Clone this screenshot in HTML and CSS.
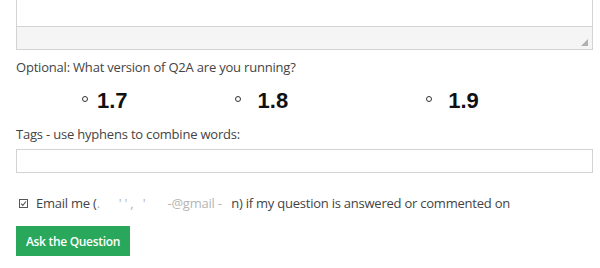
FILE: index.html
```html
<!DOCTYPE html>
<html>
<head>
<meta charset="utf-8">
<link rel="stylesheet" href="styles.css">
</head>
<body>
<div class="form">
  <div class="editor">
    <div class="editor-body"></div>
    <div class="editor-bottom"><span class="grip"></span></div>
  </div>
  <div class="label label-version">Optional: What version of Q2A are you running?</div>
  <div class="versions">
    <label class="opt opt-17"><span class="radio"></span><span class="ver">1.7</span></label>
    <label class="opt opt-18"><span class="radio"></span><span class="ver">1.8</span></label>
    <label class="opt opt-19"><span class="radio"></span><span class="ver">1.9</span></label>
  </div>
  <div class="label label-tags">Tags - use hyphens to combine words:</div>
  <div class="input"></div>
  <div class="notify">
    <span class="check"><svg width="9" height="9" viewBox="0 0 9 9"><rect x="0.5" y="0.5" width="8" height="8" fill="none" stroke="#555" stroke-width="1"/><path d="M2 4.6 L3.8 6.4 L7 2.5" fill="none" stroke="#555" stroke-width="1.1"/></svg></span>
    <span class="notify-text">Email me (<span class="redact">.&nbsp;&nbsp;&nbsp;&nbsp;&nbsp;&nbsp;' ' ,&nbsp;&nbsp;&nbsp;'&nbsp;&nbsp;&nbsp;&nbsp;&nbsp;&nbsp;&nbsp;-@gmail&nbsp;-&nbsp;&nbsp;&nbsp;</span>n) if my question is answered or commented on</span>
  </div>
  <button class="btn">Ask the Question</button>
</div>
</body>
</html>
```
FILE: styles.css
```css
html, body {
  margin: 0;
  padding: 0;
  background: #fff;
}
body {
  font-family: "Open Sans", "Noto Sans", sans-serif;
  font-size: 13px;
  letter-spacing: -0.2px;
  color: #444;
}
.form {
  padding: 0 7px 0 16px;
}
.editor {
  border: 1px solid #d3d3d3;
  border-top: none;
}
.editor-body {
  height: 26px;
  background: #fff;
}
.editor-bottom {
  box-sizing: border-box;
  height: 23px;
  background: #f5f5f5;
  border-top: 1px solid #d3d3d3;
  display: flex;
  justify-content: flex-end;
  align-items: flex-end;
  padding: 0 4px 3px 0;
}
.grip {
  width: 0;
  height: 0;
  border-left: 7px solid transparent;
  border-bottom: 7px solid #b0b0b0;
}
.label {
  line-height: 18px;
}
.label-version {
  margin-top: 8px;
}
.versions {
  display: flex;
  height: 25px;
  margin-top: 12px;
}
.opt {
  display: flex;
  height: 25px;
}
.radio {
  width: 4px;
  height: 4px;
  border: 1px solid #333;
  border-radius: 50%;
  margin-top: 8px;
}
.ver {
  font-family: "Liberation Sans", Arial, sans-serif;
  font-weight: bold;
  font-size: 22px;
  letter-spacing: 0;
  color: #111;
  line-height: 25px;
}
.opt-17 { margin-left: 66px; }
.opt-17 .ver { margin-left: 9px; }
.opt-18 { margin-left: 107px; }
.opt-18 .ver { margin-left: 17px; }
.opt-19 { margin-left: 138px; }
.opt-19 .ver { margin-left: 16px; }
.label-tags {
  margin-top: 12px;
}
.input {
  height: 22px;
  border: 1px solid #d3d3d3;
  margin-top: 6px;
}
.notify {
  display: flex;
  align-items: center;
  line-height: 18px;
  margin-top: 21px;
  padding-left: 3px;
}
.notify-text {
  letter-spacing: -0.23px;
}
.check {
  display: flex;
  margin-right: 8px;
}
.redact {
  color: #b5b5b5;
}
.btn {
  display: block;
  margin-top: 14px;
  height: 30px;
  width: 114px;
  background: #29a85c;
  color: #fff;
  border: none;
  font-family: "Open Sans", "Noto Sans", sans-serif;
  font-size: 12px;
  font-weight: 600;
  letter-spacing: -0.3px;
  padding: 0;
}
```
